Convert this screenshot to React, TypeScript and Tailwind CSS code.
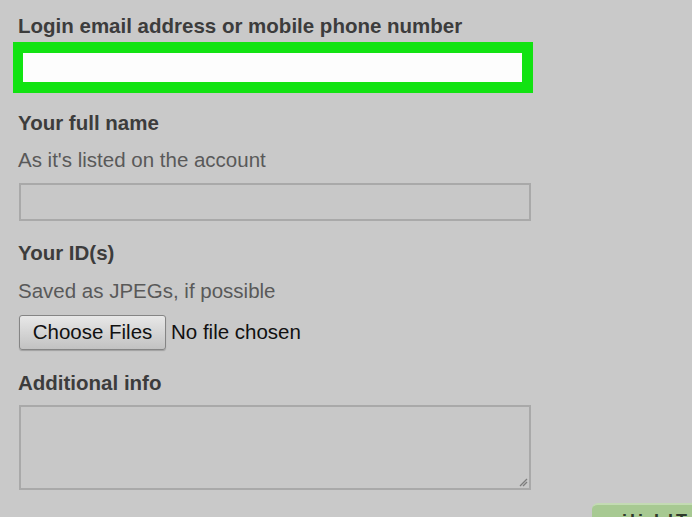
import React from "react";

const labelCls = "text-[20.5px] leading-6 font-bold text-[#3c3c3c]";
const hintCls = "text-[20.5px] leading-6 text-[#595959]";

export default function App() {
  return (
    <div
      className="relative w-[692px] h-[517px] overflow-hidden bg-[#c9c9c9]"
      style={{ fontFamily: '"Liberation Sans", Arial, sans-serif' }}
    >
      <form className="flex flex-col pl-[18px] pt-[14px]">
        <label className={labelCls}>Login email address or mobile phone number</label>

        {/* highlighted email field */}
        <div className="mt-[4px] -ml-[5px] w-[520px] h-[51px] border-[11px] border-l-[10px] border-[#12e312] bg-[#fdfdfd]">
          <input className="w-full h-full bg-transparent outline-none" />
        </div>

        <label className={`${labelCls} mt-[18px]`}>Your full name</label>
        <p className={`${hintCls} mt-[13px]`}>As it's listed on the account</p>
        <input className="mt-[11px] ml-px w-[512px] h-[38px] border-2 border-[#a9a9a9] bg-[#c8c8c8] outline-none" />

        <label className={`${labelCls} mt-[20px]`}>Your ID(s)</label>
        <p className={`${hintCls} mt-[14px]`}>Saved as JPEGs, if possible</p>

        <div className="mt-[12px] flex items-center gap-[5px]">
          <button
            type="button"
            className="ml-px h-[35px] w-[147px] rounded-[3px] border border-[#858585] bg-gradient-to-b from-[#e8e8e8] to-[#c2c2c2] text-[20.5px] text-[#111] shadow-[0_1px_1px_rgba(0,0,0,0.2)]"
          >
            Choose Files
          </button>
          <span className="text-[20.5px] text-[#111]">No file chosen</span>
        </div>

        <label className={`${labelCls} mt-[21px]`}>Additional info</label>
        <div className="relative mt-[10px] ml-px w-[512px] h-[85px] border-2 border-[#a9a9a9] bg-[#c8c8c8]">
          <textarea className="w-full h-full resize-none bg-transparent outline-none" />
          <svg className="absolute right-[1px] bottom-[1px]" width="10" height="10" viewBox="0 0 10 10">
            <path d="M9 2 L2 9 M9 5 L5 9" stroke="#7d7d7d" strokeWidth="1.3" />
          </svg>
        </div>
      </form>

      {/* watermark tab peeking from the corner */}
      <div className="absolute left-[592px] top-[503px] w-[110px] h-[30px] rounded-tl-[6px] bg-[#a7c992] border-t-2 border-[#c3dbb3] overflow-hidden">
        <span className="absolute left-[30px] top-[6px] text-[18px] leading-5 font-bold tracking-[3px] text-[#2e3a2a]">ili LIT</span>
      </div>
    </div>
  );
}
